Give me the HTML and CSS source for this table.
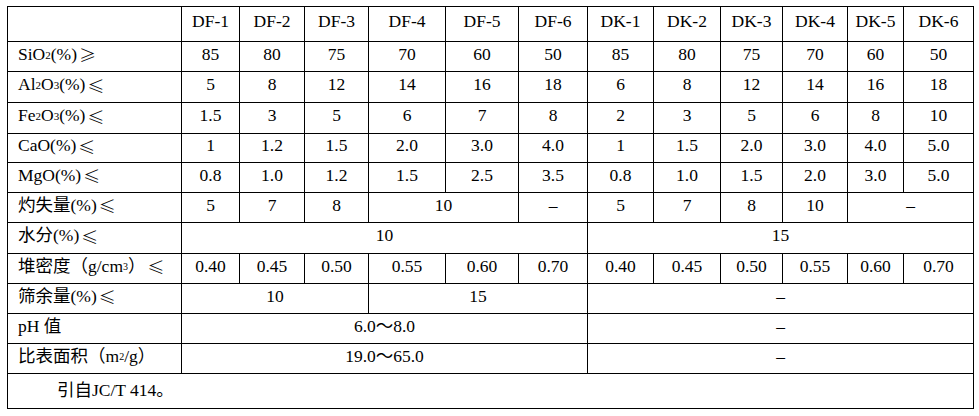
FILE: index.html
```html
<!DOCTYPE html>
<html lang="zh">
<head>
<meta charset="utf-8">
<title>DF/DK</title>
<link rel="stylesheet" href="styles.css">
</head>
<body>
<div class="grid">
  <div class="c lab"></div>
  <div class="c">DF-1</div><div class="c">DF-2</div><div class="c">DF-3</div><div class="c">DF-4</div><div class="c">DF-5</div><div class="c">DF-6</div>
  <div class="c">DK-1</div><div class="c">DK-2</div><div class="c">DK-3</div><div class="c">DK-4</div><div class="c">DK-5</div><div class="c">DK-6</div>

  <div class="c lab">SiO<sub>2</sub>(%)<span class="op">≥</span></div>
  <div class="c">85</div><div class="c">80</div><div class="c">75</div><div class="c">70</div><div class="c">60</div><div class="c">50</div>
  <div class="c">85</div><div class="c">80</div><div class="c">75</div><div class="c">70</div><div class="c">60</div><div class="c">50</div>

  <div class="c lab">Al<sub>2</sub>O<sub>3</sub>(%)<span class="op">≤</span></div>
  <div class="c">5</div><div class="c">8</div><div class="c">12</div><div class="c">14</div><div class="c">16</div><div class="c">18</div>
  <div class="c">6</div><div class="c">8</div><div class="c">12</div><div class="c">14</div><div class="c">16</div><div class="c">18</div>

  <div class="c lab">Fe<sub>2</sub>O<sub>3</sub>(%)<span class="op">≤</span></div>
  <div class="c">1.5</div><div class="c">3</div><div class="c">5</div><div class="c">6</div><div class="c">7</div><div class="c">8</div>
  <div class="c">2</div><div class="c">3</div><div class="c">5</div><div class="c">6</div><div class="c">8</div><div class="c">10</div>

  <div class="c lab">CaO(%)<span class="op">≤</span></div>
  <div class="c">1</div><div class="c">1.2</div><div class="c">1.5</div><div class="c">2.0</div><div class="c">3.0</div><div class="c">4.0</div>
  <div class="c">1</div><div class="c">1.5</div><div class="c">2.0</div><div class="c">3.0</div><div class="c">4.0</div><div class="c">5.0</div>

  <div class="c lab">MgO(%)<span class="op">≤</span></div>
  <div class="c">0.8</div><div class="c">1.0</div><div class="c">1.2</div><div class="c">1.5</div><div class="c">2.5</div><div class="c">3.5</div>
  <div class="c">0.8</div><div class="c">1.0</div><div class="c">1.5</div><div class="c">2.0</div><div class="c">3.0</div><div class="c">5.0</div>

  <div class="c lab">灼失量(%)<span class="op">≤</span></div>
  <div class="c">5</div><div class="c">7</div><div class="c">8</div><div class="c s2">10</div><div class="c">–</div>
  <div class="c">5</div><div class="c">7</div><div class="c">8</div><div class="c">10</div><div class="c s2">–</div>

  <div class="c lab">水分(%)<span class="op">≤</span></div>
  <div class="c s6">10</div>
  <div class="c s6">15</div>

  <div class="c lab">堆密度（g/cm<sup>3</sup>）<span class="op">≤</span></div>
  <div class="c">0.40</div><div class="c">0.45</div><div class="c">0.50</div><div class="c">0.55</div><div class="c">0.60</div><div class="c">0.70</div>
  <div class="c">0.40</div><div class="c">0.45</div><div class="c">0.50</div><div class="c">0.55</div><div class="c">0.60</div><div class="c">0.70</div>

  <div class="c lab">筛余量(%)<span class="op">≤</span></div>
  <div class="c s3">10</div>
  <div class="c s3">15</div>
  <div class="c s6">–</div>

  <div class="c lab">pH 值</div>
  <div class="c s6">6.0～8.0</div>
  <div class="c s6">–</div>

  <div class="c lab">比表面积（m<sup>2</sup>/g）</div>
  <div class="c s6">19.0～65.0</div>
  <div class="c s6">–</div>

  <div class="c lab note s13">引自JC/T 414。</div>
</div>
</body>
</html>
```

FILE: styles.css
```css
html, body {
  background: #fff;
}
body {
  margin: 6px 0 0 7px;
  font-family: "Liberation Serif", "Noto Sans CJK SC", serif;
  font-size: 17.5px;
  color: #000;
}
.grid {
  display: grid;
  width: max-content;
  grid-template-columns: 173px 57px 64px 63px 76px 72px 68px 65px 66px 61px 64px 55px 69px;
  grid-template-rows: 34px 29px 30px 30px 28px 29px 29px 30px 29px 29px 29px 29px 34px;
  gap: 1px;
  background: #000;
  border: 1px solid #000;
}
.c {
  background: #fff;
  display: flex;
  align-items: center;
  justify-content: center;
  padding-bottom: 4px;
  box-sizing: border-box;
  white-space: nowrap;
  line-height: 1;
}
.lab {
  justify-content: flex-start;
  padding-left: 10px;
}
.op {
  font-family: "Noto Sans CJK SC", sans-serif;
  font-weight: 300;
  font-size: 17px;
  margin-left: 2px;
}
.note {
  padding-left: 49px;
  padding-bottom: 0;
}
.s2 { grid-column: span 2; }
.s3 { grid-column: span 3; }
.s6 { grid-column: span 6; }
.s13 { grid-column: span 13; }
sub {
  font-size: 11px;
  vertical-align: -2px;
  line-height: 0;
}
sup {
  font-size: 10px;
  vertical-align: 7px;
  line-height: 0;
}
```
